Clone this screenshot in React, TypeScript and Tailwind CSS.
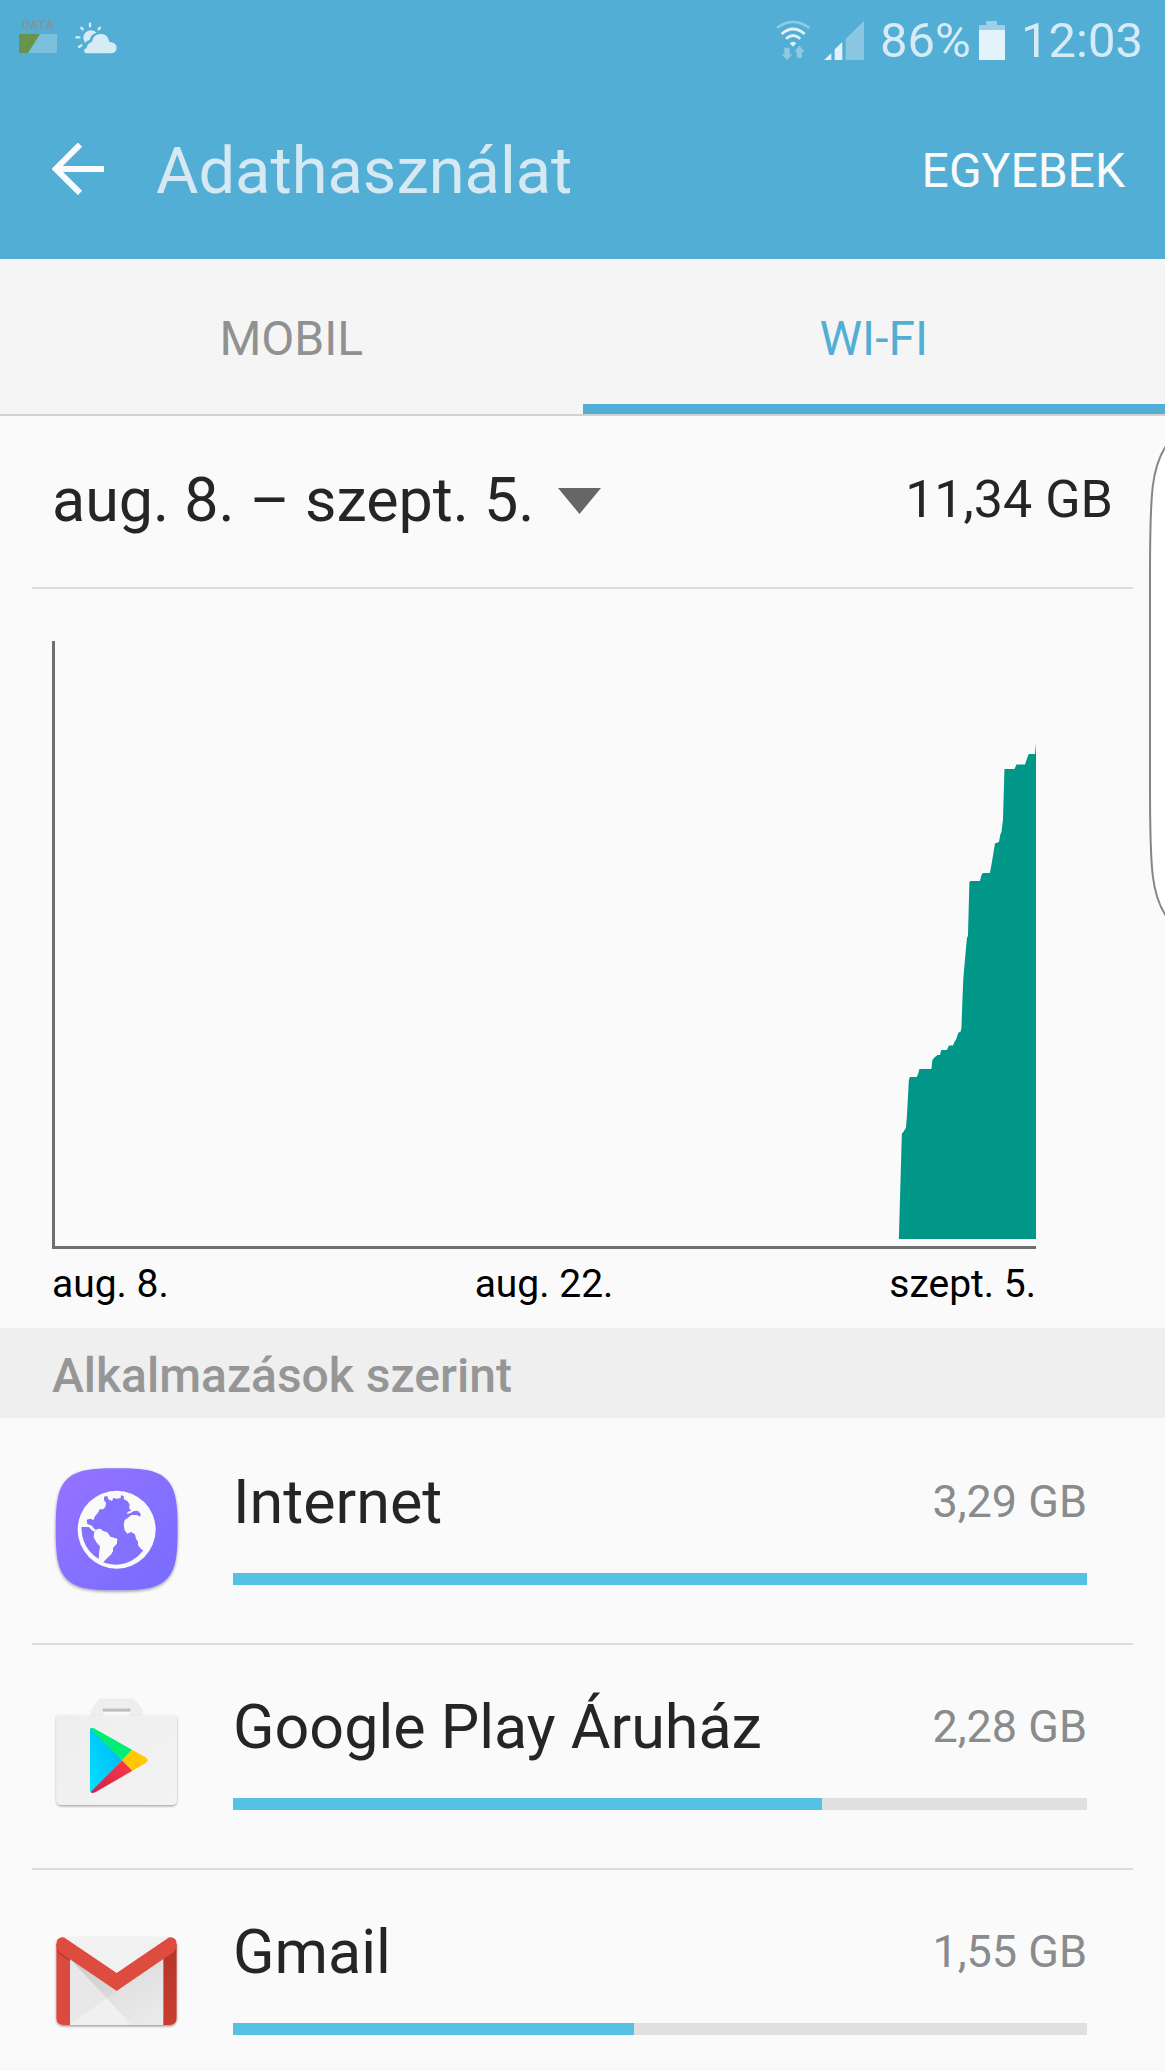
// Data usage screen - Wi-Fi usage for the current cycle with a per-app breakdown

import React, { useState } from 'react';

interface AppUsage {
  name: string;
  amount: string;
  percent: number;
  icon: React.ComponentType;
}

const tabs = [
  { id: 'mobile', label: 'MOBIL' },
  { id: 'wifi', label: 'WI-FI' }
];

const apps: AppUsage[] = [
  { name: 'Internet', amount: '3,29 GB', percent: 100, icon: InternetIcon },
  { name: 'Google Play Áruház', amount: '2,28 GB', percent: 69, icon: PlayStoreIcon },
  { name: 'Gmail', amount: '1,55 GB', percent: 47, icon: GmailIcon }
];

function InternetIcon() {
  return (
    <svg viewBox="66 69 378 378" className="size-[126px] shrink-0 overflow-visible" aria-hidden="true">
      <defs>
        <linearGradient id="internet-bg" x1="0" y1="0" x2="1" y2="1">
          <stop offset="0" stopColor="#9673ff" />
          <stop offset="1" stopColor="#766cff" />
        </linearGradient>
        <filter id="internet-shadow" x="-10%" y="-10%" width="120%" height="120%">
          <feDropShadow dx="0" dy="4" stdDeviation="4" floodColor="#000" floodOpacity="0.4" />
        </filter>
      </defs>
      <path
        d="M260 85C345 85 385 92 412 121C437 148 443 190 443 268C443 346 437 388 412 415C385 444 345 451 260 451C175 451 135 444 108 415C83 388 77 346 77 268C77 190 83 148 108 121C135 92 175 85 260 85Z"
        fill="url(#internet-bg)"
        filter="url(#internet-shadow)"
      />
      <circle cx="260" cy="269" r="117" fill="#fafafa" />
      {/* Oceans */}
      <path
        d="M222 170L232 168L235 178L246 183L250 174L261 176L272 174L273 166L281 168L282 178L293 184L299 194L297 204L304 212L293 215L291 222L302 219L312 213L324 213L332 221L331 230L321 225L304 225L294 233L284 240L281 254L284 271L292 281L303 276L315 283L318 296L324 305L324 316L334 328L340 331C320 357 292 374 260 374C246 374 232 372 219 367L229 356L243 343L249 333L249 323L260 311L262 297L240 290L232 277L217 272L210 266L200 269L193 276L184 270L176 261L155 261C154 300 173 336 206 356L210 318L201 309L191 292L192 278L200 272L190 263L186 257L172 252L170 239L181 236L190 240L195 229L205 217L209 208L219 208L226 201L228 188L222 181Z"
        fill="#8371ff"
      />
      <path d="M155 261L176 261L184 271L193 276L191 292L201 309L210 318L206 356C173 336 154 300 155 261Z" fill="#8771ff" />
      <path d="M201 268L211 266L222 276L232 278L241 290L262 297L260 311L249 323L249 333L243 343L229 356L219 367L206 356L210 318L201 309L191 292L193 278Z" fill="#fafafa" />
    </svg>
  );
}

function PlayStoreIcon() {
  return (
    <svg viewBox="66 54 378 378" className="size-[126px] shrink-0 overflow-visible" aria-hidden="true">
      <defs>
        <linearGradient id="play-bag" x1="0" y1="0" x2="1" y2="1">
          <stop offset="0" stopColor="#eeeeee" />
          <stop offset="1" stopColor="#f3f3f3" />
        </linearGradient>
        <linearGradient id="play-blue" x1="1" y1="0" x2="0" y2="1">
          <stop offset="0" stopColor="#00b0f5" />
          <stop offset="1" stopColor="#00e4ff" />
        </linearGradient>
        <linearGradient id="play-red" x1="1" y1="0" x2="0" y2="1">
          <stop offset="0" stopColor="#ff3a44" />
          <stop offset="1" stopColor="#c9214f" />
        </linearGradient>
        <filter id="play-shadow" x="-10%" y="-10%" width="120%" height="120%">
          <feDropShadow dx="0" dy="4" stdDeviation="3" floodColor="#000" floodOpacity="0.35" />
        </filter>
        <clipPath id="play-triangle">
          <path d="M180 182Q180 169 194 176L346 261Q360 271 346 280L196 367Q180 374 180 358Z" />
        </clipPath>
      </defs>
      <path
        d="M183 140V124L204 92Q208 87 216 87H303Q311 87 315 92L336 120V140H301V116H218V140Z"
        fill="#eeeeee"
        stroke="#e8e8e8"
        strokeWidth="2"
      />
      <path d="M218 116H301V125H218Z" fill="#bdbdbd" />
      <path
        d="M84 136H436Q441 136 441 141V387Q441 405 423 405H97Q79 405 79 387V141Q79 136 84 136Z"
        fill="url(#play-bag)"
        filter="url(#play-shadow)"
      />
      <g clipPath="url(#play-triangle)">
        <path d="M180 168L277 271L180 376Z" fill="url(#play-blue)" />
        <path d="M182 166L306 239L277 271L180 176Z" fill="#00ee76" />
        <path d="M277 271L308 303L190 376L180 368Z" fill="url(#play-red)" />
        <path d="M306 239L364 271L308 303L277 271Z" fill="#ffc800" />
      </g>
    </svg>
  );
}

function GmailIcon() {
  return (
    <svg viewBox="66 39 378 378" className="size-[126px] shrink-0 overflow-visible" aria-hidden="true">
      <defs>
        <linearGradient id="gmail-fold" x1="0" y1="0" x2="1" y2="1">
          <stop offset="0" stopColor="#c9c9c9" />
          <stop offset="1" stopColor="#dcdcdc" />
        </linearGradient>
        <linearGradient id="gmail-right" x1="0" y1="0" x2="0" y2="1">
          <stop offset="0" stopColor="#b3362b" />
          <stop offset="1" stopColor="#ca3c2e" />
        </linearGradient>
        <linearGradient id="gmail-body" x1="0.4" y1="0.3" x2="1" y2="1">
          <stop offset="0" stopColor="#dedede" />
          <stop offset="1" stopColor="#ececec" />
        </linearGradient>
        <filter id="gmail-shadow" x="-10%" y="-10%" width="120%" height="125%">
          <feDropShadow dx="0" dy="4" stdDeviation="3" floodColor="#000" floodOpacity="0.4" />
        </filter>
      </defs>
      <rect x="79" y="111" width="361" height="264" rx="20" fill="#f1f1f1" filter="url(#gmail-shadow)" />
      <path d="M120 178L260 274L400 178V375H120Z" fill="url(#gmail-body)" />
      <path d="M120 178L260 274L230 294Z" fill="url(#gmail-fold)" />
      <path d="M120 178L230 294L120 372Z" fill="#e8e8e8" />
      <path d="M230 294L304 375H120V372Z" fill="#f0f0f0" />
      <path d="M79 131V355Q79 375 99 375H120V160Z" fill="#db4a3e" />
      <path d="M440 131V355Q440 375 420 375H400V160Z" fill="url(#gmail-right)" />
      <path d="M79 150L120 178V184L84 160Z" fill="#b93c31" />
      <path
        d="M260 219L108 116Q101 111 96 112Q79 114 79 133Q79 147 88 156L260 273L431 156Q440 147 440 133Q440 114 423 112Q418 111 411 116Z"
        fill="#de4c40"
      />
    </svg>
  );
}

function StatusBar() {
  return (
    <div className="flex h-20 items-center justify-between pr-[22px] pl-[19px] text-[49px] leading-none text-[#d6ebf5]">
      <div className="flex items-center gap-[18px] pb-1">
        <div className="flex flex-col items-center pb-2">
          <span className="text-[13px] leading-[18px] font-bold text-[#7b97a5]">DATA</span>
          <svg width="38" height="19" viewBox="0 0 38 19" aria-hidden="true">
            <rect width="38" height="19" fill="#7bc1de" />
            <path d="M0 0H21L9 19H0Z" fill="#66944a" />
          </svg>
        </div>
        <svg width="42" height="32" viewBox="225 69 126 96" aria-hidden="true">
          <path d="M270 74V82M244 86L248 91M296 91L300 86M229 115H238M237 144L244 139" stroke="#d6ebf5" strokeWidth="7" strokeLinecap="round" />
          <path d="M256 132A22 22 0 1 1 290 101Q272 105 269 123Q260 125 256 132Z" fill="#d6ebf5" />
          <path d="M260 163Q252 162 252 155Q252 149 260 147Q262 132 276 128Q279 105 303 105Q324 106 328 128Q350 130 350 147Q349 162 334 163Z" fill="#d6ebf5" />
        </svg>
      </div>
      <div className="flex items-center">
        <svg width="34" height="40" viewBox="46 55 102 120" className="mr-3.5" aria-hidden="true">
          <g fill="none" stroke="#e0f1f8" strokeWidth="8">
            <path d="M49 79Q97 42 146 79" stroke="#8fcae3" />
            <path d="M63 97Q97 67 132 97" />
            <path d="M76 111Q97 92 119 111" />
          </g>
          <path d="M87 125Q97 116 107 125L97 135Z" fill="#e0f1f8" />
          <path d="M71 138H87V158H95L79 175L62 158H71Z" fill="#8fcae3" />
          <path d="M108 168H124V150H132L116 132L101 150H108Z" fill="#8fcae3" />
        </svg>
        <svg width="40" height="39" viewBox="188 57 120 117" className="mr-4" aria-hidden="true">
          <path d="M188 174L210 154V174ZM220 142L243 120V174H220Z" fill="#e0f1f8" />
          <path d="M253 110L308 57V174H253Z" fill="#8ac7e1" />
        </svg>
        <span>86%</span>
        <svg width="26" height="39" viewBox="0 0 26 39" className="mx-2" aria-hidden="true">
          <path d="M7 0H18V4H26V9H0V4H7Z" fill="#9cd0e6" />
          <path d="M0 9H26V39H0Z" fill="#e3f3f9" />
        </svg>
        <time className="ml-2">12:03</time>
      </div>
    </div>
  );
}

function UsageChart() {
  return (
    <section className="pt-[52px] pr-[129px] pl-[52px] text-[39px] leading-[46px] text-black">
      <div className="h-[608px] border-b-3 border-l-3 border-[#6d6f71]">
        <svg viewBox="55 641 980 605" preserveAspectRatio="none" className="block size-full" role="img" aria-label="Adathasználat grafikon">
          <path
            d="M898 1239L901 1133.5L902.5 1132L905 1128L906 1117L908 1080L909 1077H916L917.5 1073L918.5 1069H930.5L931.5 1060L933 1058L936.5 1055H939L940.5 1050H946L948 1045.5H952L954 1041L955 1040L957.5 1032.5L959.5 1032L960.5 1028L961.5 1000L962.5 977L964 960L966 938L967 936L968.5 882L969.5 881H979L980.5 875L982 873H989L991 862L994 843.5L998 842L999.5 834L1000.5 832L1002 820L1003.5 769H1013.5L1015.5 764.5H1024L1027 755.5L1028 754H1034L1035 743V1239Z"
            fill="#009688"
          />
        </svg>
      </div>
      <div className="grid grid-cols-3 pt-3 pb-[21px]">
        <span>aug. 8.</span>
        <span className="text-center">aug. 22.</span>
        <span className="text-right">szept. 5.</span>
      </div>
    </section>
  );
}

function AppRow({ name, amount, percent, icon: Icon }: AppUsage) {
  return (
    <li className="mx-8 flex gap-[55px] border-b-2 border-[#dcdcdc] pt-[43px] pr-[46px] pb-[54px] pl-5 last:border-b-0 last:pb-8">
      <Icon />
      <div className="min-w-0 grow">
        <div className="flex h-20 items-center justify-between">
          <h3 className="text-[61px]">{name}</h3>
          <span className="pb-0.5 text-[45px] text-[#898b8d]">{amount}</span>
        </div>
        <div
          className="mt-[30px] h-3 bg-[#e0e0de]"
          role="progressbar"
          aria-label={name}
          aria-valuenow={percent}
        >
          <div className="h-full bg-[#56c0e5]" style={{ width: `${percent}%` }} />
        </div>
      </div>
    </li>
  );
}

export default function App() {
  const [activeTab, setActiveTab] = useState('wifi');

  return (
    <div className="relative min-h-screen overflow-hidden bg-[#fafafa] font-[Roboto,sans-serif] text-[#252525]">
      <header className="bg-[#52aed5]">
        <StatusBar />
        <div className="flex h-[179px] items-center pr-10 pl-[52px]">
          <button type="button" aria-label="Vissza" className="mr-[52px] pb-0.5">
            <svg width="52" height="52" viewBox="156 427 156 156" aria-hidden="true">
              <path d="M240 432L167 505L240 577M167 505H312" fill="none" stroke="#fafafa" strokeWidth="18" />
            </svg>
          </button>
          <h1 className="grow pt-1 text-[65px] text-[#d6e9f3]">Adathasználat</h1>
          <button type="button" className="pt-0.5 text-[48px] text-[#fafafa]">EGYEBEK</button>
        </div>
      </header>

      <div role="tablist" className="grid h-[157px] grid-cols-2 border-b-2 border-[#d0d0d0] bg-[#f5f5f5] text-[48px]">
        {tabs.map(tab => (
          <button
            key={tab.id}
            type="button"
            role="tab"
            aria-selected={activeTab === tab.id}
            onClick={() => setActiveTab(tab.id)}
            className={activeTab === tab.id
              ? 'border-b-10 border-[#52aed4] pt-3.5 text-[#52aed4]'
              : 'border-b-10 border-transparent pt-3.5 text-[#919191]'}
          >
            {tab.label}
          </button>
        ))}
      </div>

      <main>
        <div className="mx-8 flex h-[173px] items-center justify-between border-b-2 border-[#dcdcdc] px-5 pb-1">
          <label className="flex items-center pt-0.5">
            <select aria-label="Időszak" className="field-sizing-content appearance-none bg-transparent text-[61px]">
              <option>aug. 8. – szept. 5.</option>
            </select>
            <svg width="43" height="26" viewBox="0 0 43 26" className="ml-6" aria-hidden="true">
              <path d="M0 0H43L21.5 26Z" fill="#666" />
            </svg>
          </label>
          <span className="text-[52px]">11,34 GB</span>
        </div>

        <UsageChart />

        <h2 className="mb-0.5 bg-[#efefef] px-[52px] pt-1.5 text-[48px] leading-[84px] font-medium text-[#969696]">
          Alkalmazások szerint
        </h2>
        <ul>
          {apps.map(app => (
            <AppRow key={app.name} {...app} />
          ))}
        </ul>
      </main>

      {/* Edge panel handle */}
      <svg width="16" height="472" viewBox="0 0 16 472" className="absolute top-[445px] right-0" aria-hidden="true">
        <path
          d="M17 1C3 22 1 45 1 130V342C1 427 3 450 17 471"
          fill="#fefefe"
          stroke="#858585"
          strokeWidth="2"
        />
      </svg>
    </div>
  );
}
